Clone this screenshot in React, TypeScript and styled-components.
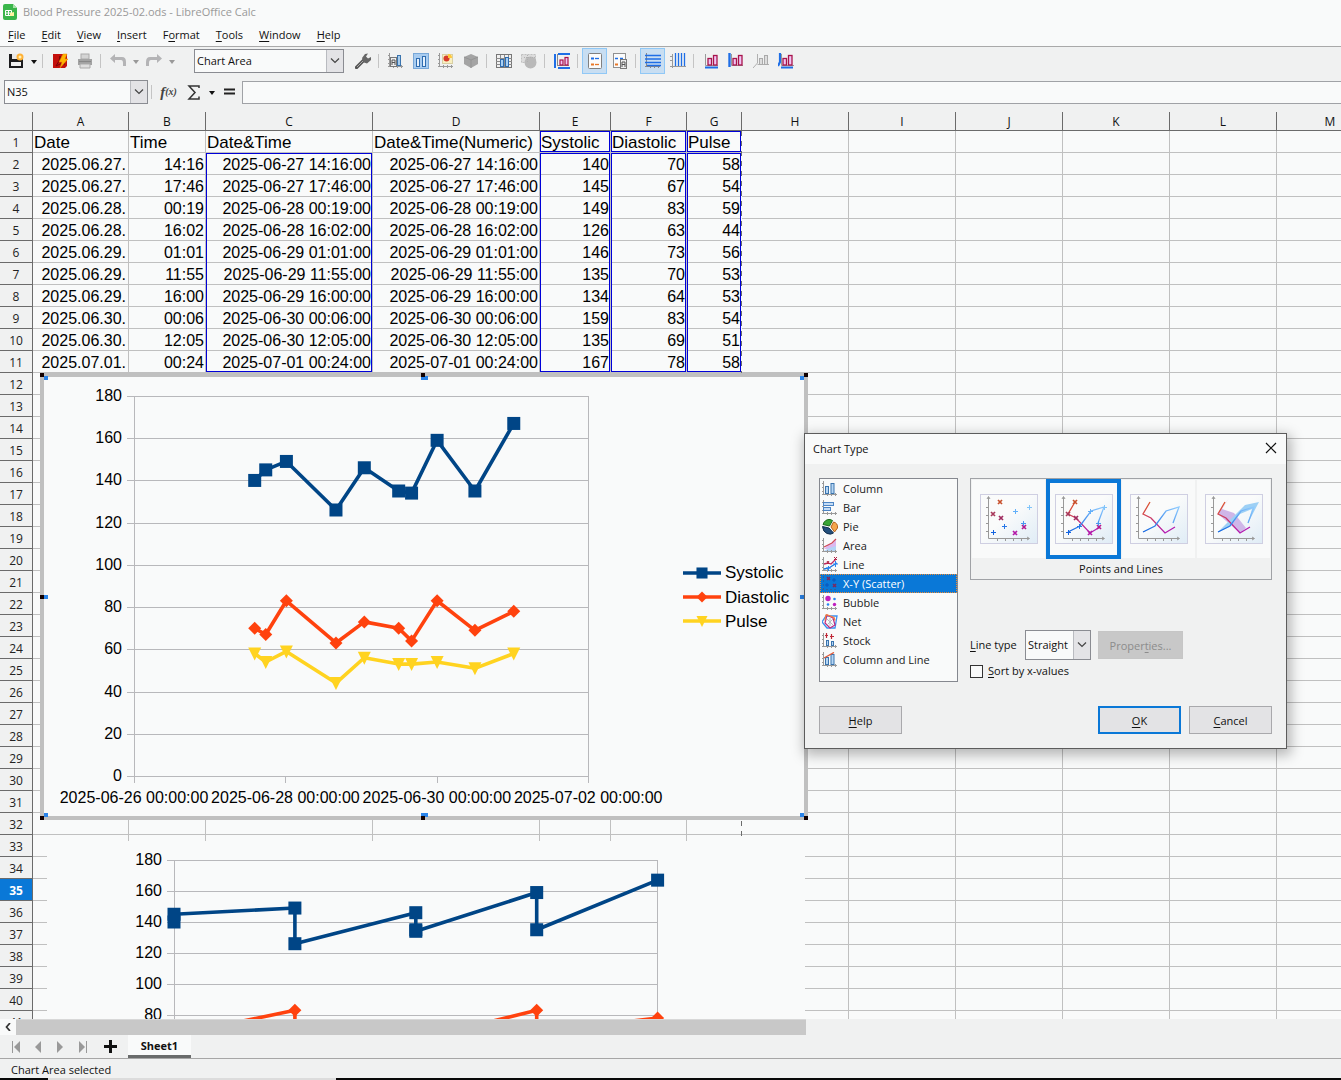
import React from "react";
import styled, { createGlobalStyle, css } from "styled-components";

const paper = "#f9fafa";
const chrome = "#f0f1f1";
const line = "#c0c0c0";
const dark = "#6b6b6b";
const accent = "#0a78d7";
const systolicColor = "#004586";
const diastolicColor = "#ff420e";
const pulseColor = "#ffd320";

const GlobalStyle = createGlobalStyle`
  * { box-sizing: border-box; }
  body { margin: 0; overflow: hidden; background: ${chrome}; }
  body, button, input, select {
    font-family: "Open Sans", "Noto Sans", sans-serif;
    font-size: 11px;
    line-height: 16px;
    color: #111;
  }
  button { margin: 0; padding: 0; }
`;

const Window = styled.div`
  position: relative;
  display: flex;
  flex-direction: column;
  height: 100vh;
  overflow: hidden;
  background: ${chrome};
`;

const TitleBar = styled.header`
  display: flex;
  align-items: center;
  gap: 5px;
  height: 23px;
  padding: 0 2px;
  background: ${paper};
  color: #999;
  flex: none;
`;

const MenuBar = styled.nav`
  display: flex;
  height: 24px;
  flex: none;
  background: ${paper};
  border-bottom: 1px solid #a9a9a9;
`;

const MenuItem = styled.button`
  border: 0;
  background: none;
  padding: 1px 8px 0;
`;

const U = styled.span`
  text-decoration: underline;
  text-underline-offset: 2px;
`;

const Toolbar = styled.div`
  display: flex;
  align-items: center;
  height: 28px;
  padding-left: 3px;
  flex: none;
`;

const ToolButton = styled.button<{ $on?: boolean }>`
  width: 25px;
  height: 26px;
  border: 1px solid ${(p) => (p.$on ? "#90c8f6" : "transparent")};
  background: ${(p) => (p.$on ? "#c8def2" : "none")};
  display: grid;
  place-items: center;
  flex: none;
`;

const CaretButton = styled.button`
  width: 11px;
  height: 24px;
  border: 0;
  background: none;
  display: grid;
  place-items: center;
  flex: none;
`;

const Separator = styled.span`
  width: 1px;
  height: 14px;
  margin: 0 4px 0 3px;
  background: #c4c4c4;
  flex: none;
`;

const SelectGap = styled.span`
  width: 6px;
  flex: none;
`;

const SelectFrame = styled.div<{ $w: number; $h: number; $gap?: number }>`
  display: flex;
  position: relative;
  width: ${(p) => p.$w}px;
  height: ${(p) => p.$h}px;
  margin-left: ${(p) => p.$gap || 0}px;
  border: 1px solid #8a8c92;
  background: ${paper};
  flex: none;
  select, input {
    appearance: none;
    flex: 1;
    min-width: 0;
    border: 0;
    border-radius: 0;
    outline: 0;
    padding: 0 0 0 2px;
    background: transparent;
  }
`;

const DropMark = styled.span`
  position: absolute;
  right: 0;
  top: 0;
  bottom: 0;
  width: 17px;
  display: grid;
  place-items: center;
  background: #e3e3e6;
  border-left: 1px solid #b9bbc0;
  pointer-events: none;
`;

const DropButton = styled.button`
  width: 17px;
  display: grid;
  place-items: center;
  background: #e3e3e6;
  border: 0;
  border-left: 1px solid #b9bbc0;
`;

const FormulaBar = styled.div`
  display: flex;
  align-items: center;
  height: 34px;
  padding-left: 4px;
  flex: none;
`;

const FormulaButton = styled.button`
  width: 25px;
  height: 22px;
  border: 0;
  background: none;
  display: grid;
  place-items: center;
`;

const FxText = styled.span`
  font-family: "Liberation Serif", serif;
  font-style: italic;
  font-weight: 700;
  font-size: 15px;
  color: #444;
  small { font-size: 10px; vertical-align: 2px; }
`;

const FormulaInput = styled.input`
  flex: 1;
  height: 23px;
  border: 1px solid #a0a2a6;
  border-right: 0;
  background: ${paper};
  outline: 0;
`;

const Sheet = styled.main`
  position: relative;
  flex: 1;
  min-height: 0;
  margin-top: 3px;
  overflow: hidden;
  background: ${paper};
`;

const Grid = styled.table`
  table-layout: fixed;
  border-spacing: 0;
  width: 1384px;
  min-width: 100%;
`;

const ColHead = styled.th`
  height: 19px;
  padding: 2px 0 0;
  background: ${chrome};
  border-right: 1px solid ${dark};
  border-bottom: 1px solid ${dark};
  font-weight: 400;
  font-size: 12px;
  line-height: 16px;
`;

const RowHead = styled.th<{ $active?: boolean }>`
  height: 22px;
  padding: 2px 0 0;
  background: ${(p) => (p.$active ? accent : chrome)};
  color: ${(p) => (p.$active ? "#fff" : "#222")};
  border-right: 1px solid ${dark};
  border-bottom: 1px solid ${dark};
  font-weight: ${(p) => (p.$active ? 700 : 400)};
  font-size: 12px;
  line-height: 19px;
`;

const Cell = styled.td<{ $kind?: "head" | "num" | "date" }>`
  height: 22px;
  padding: 2px 1px 0;
  border-right: 1px solid ${line};
  border-bottom: 1px solid ${line};
  font-family: "Liberation Sans", Arial, sans-serif;
  font-size: ${(p) => (p.$kind === "head" ? 17 : 16)}px;
  line-height: 19px;
  color: #000;
  white-space: nowrap;
  text-align: ${(p) => (p.$kind === "head" ? "left" : "right")};
  ${(p) => p.$kind === "date" && css`padding-right: 2px;`}
`;

const Range = styled.div<{ $x: number; $y: number; $w: number; $h: number }>`
  position: absolute;
  left: ${(p) => p.$x}px;
  top: ${(p) => p.$y}px;
  width: ${(p) => p.$w}px;
  height: ${(p) => p.$h}px;
  border: 1px solid #0000d8;
  pointer-events: none;
`;

const PageBreak = styled.div`
  position: absolute;
  left: 741px;
  top: 19px;
  height: 710px;
  width: 1px;
  background: repeating-linear-gradient(${dark} 0 5px, ${paper} 5px 10px);
`;

const ChartObject = styled.div`
  position: absolute;
  left: 40px;
  top: 261px;
  width: 768px;
  height: 447px;
  border: 4px solid ${line};
  background: ${paper};
  svg { display: block; overflow: visible; }
`;

const SecondChart = styled.div`
  position: absolute;
  left: 47px;
  top: 729px;
  width: 758px;
  height: 440px;
  background: ${paper};
  svg { display: block; }
`;

const ChartSvg = styled.svg`
  font-family: "Liberation Sans", Arial, sans-serif;
  font-size: 16px;
  .legend { font-size: 17px; }
`;

const ScrollRow = styled.div`
  display: flex;
  height: 16px;
  flex: none;
`;

const ScrollArrow = styled.button`
  width: 16px;
  border: 0;
  background: ${paper};
  display: grid;
  place-items: center;
`;

const ScrollThumb = styled.div`
  flex: 0 0 790px;
  background: #c8c8c8;
  border-top: 1px solid #d8d8d8;
`;

const TabBar = styled.div`
  display: flex;
  height: 24px;
  padding-left: 5px;
  border-bottom: 1px solid #a6a6a6;
  flex: none;
`;

const TabNav = styled.button<{ $w?: number }>`
  width: ${(p) => p.$w || 22}px;
  border: 0;
  background: none;
  display: grid;
  place-items: center;
`;

const SheetTab = styled.button`
  width: 63px;
  padding-top: 2px;
  border: 0;
  border-bottom: 3px solid #696b6b;
  background: ${paper};
  font-weight: 700;
  color: #111;
`;

const StatusBar = styled.footer`
  height: 19px;
  padding: 3px 11px 0;
  flex: none;
`;

const BottomEdge = styled.div`
  display: flex;
  height: 2px;
  background: #080808;
  flex: none;
  &::before {
    content: "";
    width: 288px;
    margin-left: 48px;
    background: #dcdcdc;
  }
`;

const Dialog = styled.section`
  position: absolute;
  left: 804px;
  top: 433px;
  width: 483px;
  border: 1px solid #5c5c5c;
  background: ${chrome};
  box-shadow: 2px 4px 12px 2px rgba(0, 0, 0, 0.28);
`;

const DialogTitle = styled.div`
  display: flex;
  align-items: center;
  justify-content: space-between;
  height: 30px;
  padding: 0 8px;
  background: ${paper};
`;

const CloseButton = styled.button`
  width: 14px;
  height: 16px;
  border: 0;
  background: none;
`;

const DialogBody = styled.div`
  display: grid;
  grid-template-columns: 139px 302px;
  column-gap: 12px;
  padding: 14px 14px 24px;
`;

const TypeList = styled.ul`
  list-style: none;
  margin: 0;
  padding: 0;
  height: 204px;
  border: 1px solid #85888f;
  background: ${paper};
`;

const TypeRow = styled.li<{ $on?: boolean }>`
  display: flex;
  align-items: center;
  gap: 5px;
  height: 19px;
  padding-left: 2px;
  color: ${(p) => (p.$on ? "#fff" : "#222")};
  background: ${(p) => (p.$on ? accent : "none")};
  outline: ${(p) => (p.$on ? "1px dotted #f08a30" : "none")};
  outline-offset: -1px;
`;

const Gallery = styled.div`
  border: 1px solid #a0a2a6;
  height: 102px;
  display: grid;
  grid-template-columns: repeat(4, 1fr);
  text-align: center;
`;

const Thumb = styled.button<{ $on?: boolean }>`
  height: 80px;
  border: ${(p) => (p.$on ? `4px solid ${accent}` : `1px solid ${chrome}`)};
  background: ${paper};
  display: grid;
  place-items: center;
`;

const ThumbName = styled.div`
  grid-column: 1 / -1;
  line-height: 20px;
`;

const Options = styled.div`
  display: flex;
  align-items: center;
  margin-top: 50px;
`;

const OptionLabel = styled.label`
  width: 55px;
`;

const PushButton = styled.button<{ $primary?: boolean; $wide?: boolean }>`
  width: ${(p) => (p.$wide ? 85 : 83)}px;
  height: 28px;
  padding-top: 1px;
  border: ${(p) => (p.$primary ? `2px solid ${accent}` : "1px solid #a9a9ac")};
  background: #e3e3e5;
  &:disabled {
    margin-left: 7px;
    border-color: #c6c6c6;
    background: #c8c8c8;
    color: #8c8c8c;
  }
`;

const CheckLabel = styled.label`
  display: flex;
  align-items: center;
  gap: 5px;
  margin-top: 3px;
  input {
    appearance: none;
    width: 13px;
    height: 13px;
    margin: 0;
    border: 1px solid #333;
    background: ${paper};
  }
`;

const DialogActions = styled.div`
  display: flex;
  gap: 8px;
  padding: 0 14px 14px;
  > :first-child { margin-right: auto; }
`;

/* ---------- data ---------- */

const readings = [
  ["2025-06-27", "14:16", 140, 70, 58],
  ["2025-06-27", "17:46", 145, 67, 54],
  ["2025-06-28", "00:19", 149, 83, 59],
  ["2025-06-28", "16:02", 126, 63, 44],
  ["2025-06-29", "01:01", 146, 73, 56],
  ["2025-06-29", "11:55", 135, 70, 53],
  ["2025-06-29", "16:00", 134, 64, 53],
  ["2025-06-30", "00:06", 159, 83, 54],
  ["2025-06-30", "12:05", 135, 69, 51],
  ["2025-07-01", "00:24", 167, 78, 58],
] as [string, string, number, number, number][];

const day = (d: string) => (d === "2025-07-01" ? 5 : Number(d.slice(8)) - 26);
const frac = (t: string) => (Number(t.slice(0, 2)) + Number(t.slice(3)) / 60) / 24;

const columns: [string, number][] = [
  ["A", 96], ["B", 77], ["C", 167], ["D", 167], ["E", 71], ["F", 76], ["G", 55],
  ["H", 107], ["I", 107], ["J", 107], ["K", 107], ["L", 107], ["M", 107],
];
const headings = ["Date", "Time", "Date&Time", "Date&Time(Numeric)", "Systolic", "Diastolic", "Pulse"];

/* ---------- charts ---------- */

const Mark = ({ kind, x, y }: { kind: number; x: number; y: number }) =>
  kind === 0 ? <rect x={x - 6.5} y={y - 6.5} width="13" height="13" fill={systolicColor} /> :
  kind === 1 ? <path d={`M${x} ${y - 6.5}l6.5 6.5l-6.5 6.5l-6.5-6.5z`} fill={diastolicColor} /> :
  <path d={`M${x - 6.5} ${y - 6}h13l-6.5 13z`} fill={pulseColor} />;

const seriesColors = [systolicColor, diastolicColor, pulseColor];

const Series = ({ fx, fy }: { fx: (i: number) => number; fy: (v: number) => number }) => (
  <>
    {[0, 1, 2].map((s) => (
      <g key={s}>
        <polyline fill="none" stroke={seriesColors[s]} strokeWidth="3.6" strokeLinejoin="round"
          points={readings.map((r, i) => `${fx(i)},${fy(r[s + 2] as number)}`).join(" ")} />
        {readings.map((r, i) => <Mark key={i} kind={s} x={fx(i)} y={fy(r[s + 2] as number)} />)}
      </g>
    ))}
  </>
);

const Axes = ({ x0, x1, y0, step, rows = 10 }: { x0: number; x1: number; y0: number; step: number; rows?: number }) => (
  <g stroke="#b8b8bb">
    {Array.from({ length: rows }, (_, i) => (
      <React.Fragment key={i}>
        <path d={`M${x0 - 7} ${Math.round(y0 + i * step) + 0.5}H${x1}`} />
        <text x={x0 - 12} y={Math.round(y0 + i * step) + 5} textAnchor="end" fill="#000" stroke="none">{180 - i * 20}</text>
      </React.Fragment>
    ))}
    <path d={`M${x0 + 0.5} ${y0}V${y0 + step * 9 + 7}M${x1 + 0.5} ${y0}V${y0 + step * 9 + 7}`} />
  </g>
);

const Handles = () => (
  <>
    {[0, 383, 764].flatMap((x, i) => [0, 222, 443].map((y, j) => i === 1 && j === 1 ? null : (
      <g key={`${x}-${y}`} transform={`translate(${x - 4 - (i === 1 ? 2 : 0)} ${y - 4})`}>
        <path d={`M${i === 2 ? -4 : i === 1 ? 0 : 4} ${j === 2 ? -3 : j === 1 ? 0 : 3}h${i === 1 ? 7 : 4}v4h${i === 1 ? -7 : -4}z`} fill="#2a84ea" />
        <rect width="4" height="4" fill="#100" />
      </g>
    )))}
  </>
);

const TimeChart = () => {
  const fx = (i: number) => 90 + (day(readings[i][0]) + frac(readings[i][1])) * 75.7;
  const fy = (v: number) => 19 + (180 - v) * 2.111;
  return (
    <ChartSvg width="760" height="439" viewBox="0 0 760 439">
      <Axes x0={90} x1={544} y0={19} step={42.22} />
      <path d="M241.5 399v7M393.5 399v7" stroke="#b8b8bb" />
      {["2025-06-26", "2025-06-28", "2025-06-30", "2025-07-02"].map((d, i) => (
        <text key={d} x={90 + i * 151.4} y="426" textAnchor="middle">{d} 00:00:00</text>
      ))}
      <Series fx={fx} fy={fy} />
      {["Systolic", "Diastolic", "Pulse"].map((n, i) => (
        <g key={n}>
          <path d={`M639 ${196 + i * 24}h38`} stroke={seriesColors[i]} strokeWidth="3.6" />
          <g transform={`translate(658 ${196 + i * 24}) scale(0.85)`}><Mark kind={i} x={0} y={0} /></g>
          <text className="legend" x="681" y={201 + i * 24.5}>{n}</text>
        </g>
      ))}
      <Handles />
    </ChartSvg>
  );
};

const DateChart = () => (
  <ChartSvg width="758" height="440" viewBox="0 0 758 440">
    <Axes x0={127} x1={610} y0={19} step={31} rows={6} />
    <Series fx={(i) => 127 + (day(readings[i][0]) - 1) * 120.9} fy={(v) => 19 + (180 - v) * 1.55} />
  </ChartSvg>
);

/* ---------- icons ---------- */

const Svg = ({ s = 16, h, children }: { s?: number; h?: number; children: React.ReactNode }) => (
  <svg width={s} height={h || s} viewBox={`0 0 ${s} ${h || s}`} fill="none">{children}</svg>
);
const Chevron = () => <Svg s={10} h={6}><path d="M1 .5l4 4l4-4" stroke="#444" strokeWidth="1.2" /></Svg>;
const Caret = ({ c = "#111" }: { c?: string }) => <Svg s={8} h={6}><path d="M1 2h6l-3 4z" fill={c} /></Svg>;
const axes = <path d="M1.5 0v14M0 13.5h15M0 2.5h2M0 6.5h2M0 10.5h2M5.5 12v3M9.5 12v3M13.5 12v3" stroke="#999" />;
const blueBars = (
  <g fill="#b6d6f4" stroke="#3a74ae"><rect x="3.500" y="5.500" width="3" height="7" /><rect x="9" y="2.500" width="3" height="10" /></g>
);
const pinkBars = (
  <g fill="#f0c4f4" stroke="#a8144c" strokeWidth="1.300"><rect x="5" y="5.500" width="3.500" height="6.500" /><rect x="10.500" y="2.500" width="3.500" height="9.500" /></g>
);

const listIcons: Record<string, React.ReactNode> = {
  Column: <>{axes}{blueBars}</>,
  Bar: <>{axes}<g fill="#c4dcf6" stroke="#4c84c4"><rect x="1.5" y="2.5" width="10" height="3" /><rect x="1.5" y="7.5" width="7" height="3" /></g></>,
  Pie: <><path d="M7.500 7L1 5.500Q3 0 8 .5l2.500 1z" fill="#3aa636" stroke="#1b6a1b" /><path d="M9 8l2.500-5q4.500 1 4 6l-3 4z" fill="#f5a64c" stroke="#b3611c" /><path d="M7 9L.5 7.500Q1 13 5 14.500q4 1.500 6.500-.5z" fill="#234f7c" stroke="#132f4e" /></>,
  Area: <><path d="M2 11L6 7l4-1l4-4v9z" fill="#dcb8ee" /><path d="M2 13l5-3l7-2v5z" fill="#b4d4f6" />{axes}<path d="M2 9l4-2l4-2l4-4" stroke="#d04858" strokeWidth="1.300" /></>,
  Line: <>{axes}<path d="M2 7l4-1l3 1l5-5" stroke="#c02860" strokeWidth="1.300" /><path d="M2 12l5-1l3-2l5-3" stroke="#1672e0" strokeWidth="1.300" /><path d="M12 0l3 3m0-3l-3 3M5 4l2 3m0-3l-2 3" stroke="#b02040" /><path d="M11 7h5M13.500 4v6M4 11h5M6.500 9v5" stroke="#2a86f0" /></>,
  "X-Y (Scatter)": <><path d="M1.500 0v14M0 13.500h15" stroke="#30609c" strokeDasharray="2 2" /><path d="M5 1l3 3m0-3l-3 3M11 8l3 3m0-3l-3 3" stroke="#7a2a62" strokeWidth="1.500" /><path d="M3 9h4M5 7v4M10 4h4M12 2v4" stroke="#0b55bb" /></>,
  Bubble: <>{axes}<circle cx="6" cy="3.500" r="2.700" fill="#c020c0" /><circle cx="12.500" cy="9.500" r="1.700" fill="#c020c0" /><circle cx="12.500" cy="4" r="1.300" fill="#2a86f0" /><circle cx="6" cy="9.500" r="1.300" fill="#2a86f0" /></>,
  Net: <><path d="M4 2l11 0l-2 12l-8 0l-5-6z" stroke="#3a8ef0" strokeWidth="1.300" /><path d="M5 1l-2 8l5 5l5-3l-2-7z" stroke="#c02880" strokeWidth="1.200" /><path d="M4 .5l8 3l1 3M4 .5l-1 6" stroke="#f08040" strokeWidth="1.300" /><path d="M5 5l6 6m0-6l-6 6M8 4v8" stroke="#b8b8c4" /></>,
  Stock: <>{axes}<g fill="#b6d6f4" stroke="#3a74ae"><rect x="4.500" y="7.500" width="2" height="5" /><rect x="9.500" y="8.500" width="2" height="4" /></g><path d="M4.500 0v5M3 2.500h3M9.500 1v5M8 3.500h4" stroke="#c02838" strokeWidth="1.200" /></>,
  "Column and Line": <>{axes}{blueBars}<path d="M2 6l10-5.500" stroke="#e05a3a" strokeWidth="1.400" /></>,
};

const ThumbIcon = ({ kind }: { kind: number }) => (
  <svg width="60" height="52" viewBox="0 0 60 52" fill="none">
    <defs>
      <linearGradient id="card" x1="0" y1="0" x2="1" y2="1"><stop offset=".45" stopColor="#fafbfb" /><stop offset="1" stopColor="#dfecf6" /></linearGradient>
      <linearGradient id="warm" x1="0" y1="0" x2=".6" y2="1"><stop stopColor="#e05a20" /><stop offset="1" stopColor="#b41ab0" /></linearGradient>
      <linearGradient id="cool" x1="0" y1="1" x2="1" y2="0"><stop stopColor="#0c62e0" /><stop offset="1" stopColor="#90ccff" /></linearGradient>
    </defs>
    <rect x="1.500" y="1.500" width="57" height="49" fill="url(#card)" stroke="#cfcfe2" />
    <path d="M9.500 45.500V4M8 6l1.500-2.500L11 6M9.500 45.500H50M48 44l2.500 1.500L48 47M7 14.500h3M7 22.500h3M7 30.500h3M7 38.500h3M18.500 45v3M26.500 45v3M34.500 45v3M42.500 45v3" stroke="#999" />
    {kind === 3 && <><path d="M14 21l11-16l-7 11l12 4l12 15l-6 5z" fill="#cfb6e8" /><path d="M14 39l22-22l5-5l14-3l-11 21l4-14l-12 5l-11 13z" fill="#9dd0f5" /></>}
    {kind > 0 && <><path d="M21 9L14 21l8 4l14 15l10-6" stroke="url(#warm)" strokeWidth="1.300" /><path d="M14 39l12-6l11-15l13-4l-6 16" stroke="url(#cool)" strokeWidth="1.300" /></>}
    {kind < 2 && <>
      {[[21, 9, "#c8502c"], [14, 21, "#a83a5c"], [22, 25, "#a02c60"], [36, 40, "#b41aa8"], [45, 34, "#b41a90"]].map(([x, y, c]) => (
        <path key={`${x}`} d={`M${Number(x) - 2} ${Number(y) - 2}l4 4m0-4l-4 4`} stroke={c as string} strokeWidth="1.700" />
      ))}
      {[[14.5, 39.5, "#1464e0"], [25.5, 33.5, "#2878e8"], [36.5, 18.5, "#62b0fa"], [44.5, 30.5, "#4898f0"], [50.5, 14.5, "#80c4fa"]].map(([x, y, c]) => (
        <path key={`${x}`} d={`M${Number(x) - 2.5} ${y}h5M${x} ${Number(y) - 2.5}v5`} stroke={c as string} />
      ))}
    </>}
  </svg>
);

const toolIcons: Record<string, React.ReactNode> = {
  save: <><path d="M1 1h12l2 2v12H1z" fill="#1c1c1e" /><rect x="4" y="1" width="7" height="5" fill="#e8e8e8" /><rect x="3" y="9" width="10" height="4" fill="#f0f0f0" /><circle cx="12" cy="4" r="3.500" fill="#ffb238" /><circle cx="12" cy="4" r="1.500" fill="#fff2b8" /></>,
  pdf: <><path d="M1 1h14v12l-2 2H1z" fill="#c4100c" /><path d="M4 13q4-5 4-10q1 7 5 8q-5-1-9 2" stroke="#7a0606" /><path d="M11 1h4l-2 5h3L8 15l2-6H7z" fill="#ffb400" stroke="#e88800" strokeWidth=".5" /></>,
  print: <><rect x="4" y="1" width="8" height="5" fill="#d4d4d4" stroke="#aaa" /><path d="M1 6h14v6H1z" fill="#a2a2a2" /><path d="M3 11h10v4H3z" fill="#dedede" stroke="#aaa" /><path d="M2 8.500h12" stroke="#888" /></>,
  undo: <path d="M5 1L0 5.500L5 10V7h6q2 0 2 3v3h3V9q0-5-4-5H5z" fill="#b4b4b6" />,
  redo: <path d="M11 1l5 4.500L11 10V7H5q-2 0-2 3v3H0V9q0-5 4-5h7z" fill="#b4b4b6" />,
  wrench: <><path d="M1.500 14.500l7-7" stroke="#555" strokeWidth="3.200" strokeLinecap="round" /><path d="M8 8L7 5l3-4l3-.5l-2 3l2 2l3-1.500v3l-4 3.500l-3-1z" fill="#666" /><path d="M2 14l6-6" stroke="#aaa" /></>,
  select: <>{axes}<rect x="2.500" y="4.500" width="6" height="9" fill="#eee" stroke="#777" /><path d="M4 12V7h3v5M4 9.500h3" stroke="#555" /><rect x="9.500" y="2.500" width="3" height="10" fill="#a8ccec" stroke="#3a74ae" /></>,
  type: <><rect x=".5" y=".5" width="15" height="15" fill="#a8ccf0" stroke="#79a8d8" /><g fill="#e6f1fc" stroke="#2e6cb0"><rect x="3.500" y="5.500" width="3" height="8" /><rect x="9.500" y="3.500" width="3" height="10" /></g></>,
  range: <>{axes}<rect x="4.500" y="1.500" width="10" height="9" fill="#f8efc0" stroke="#d8cfa4" /><circle cx="8.500" cy="5.500" r="3" fill="#d63a2a" /><path d="M10 5V1a4 4 0 0 1 4 4z" fill="#ffc83c" /></>,
  cube: <><path d="M1 4l7-3l7 3v7l-7 4l-7-4z" fill="#a4a4a4" /><path d="M1 4l7 3l7-3M8 7v8" stroke="#949494" /></>,
  table: <><rect x=".5" y="1.500" width="15" height="13" fill="#f0f0f0" stroke="#777" /><path d="M0 5.500h16M0 8.500h16M0 11.500h16M4.500 2v12M8.500 2v12M12.500 2v12" stroke="#8a8a8a" /><rect x="4.500" y="6.500" width="3" height="7" fill="#a8d0f4" stroke="#2e6cb0" /><rect x="9.500" y="4.500" width="3" height="9" fill="#a8d0f4" stroke="#2e6cb0" /></>,
  pieOff: <><path d="M.5 1.500h14v8h-14z" fill="#dcdcdc" stroke="#c0c0c0" strokeDasharray="2 1" /><circle cx="9.500" cy="9.500" r="6" fill="#b9b9b9" /><path d="M3 4.500h11M6.500 2v7" stroke="#b0b0b0" strokeDasharray="1 1" /></>,
  titles: <><path d="M1 1v14M4 1h12M4 15h12" stroke="#1e6ee6" strokeWidth="2" /><path d="M3.500 1v12M3 12.500h12" stroke="#888" /><g fill="#f0c4f4" stroke="#a8144c" strokeWidth="1.200"><rect x="6" y="7" width="3" height="5" /><rect x="11" y="4.500" width="3" height="7.500" /></g></>,
  legend: <><rect x="1.500" y=".5" width="13" height="15" rx="1" fill="#fbfbfb" stroke="#808080" /><path d="M4 5.500h3" stroke="#1e6ee6" strokeWidth="2" /><path d="M4 11.500h3" stroke="#e87828" strokeWidth="2" /><path d="M8 5.500h4" stroke="#1e6ee6" strokeWidth="1.300" /><path d="M8 11.500h4" stroke="#e87828" strokeWidth="1.300" /></>,
  legendPos: <><rect x="1.500" y=".5" width="12" height="14" fill="#fbfbfb" stroke="#909090" /><path d="M3 5.500h3M8 5.500h3" stroke="#1e6ee6" strokeWidth="1.600" /><path d="M3 11.500h3" stroke="#e87828" strokeWidth="2" /><rect x="8.500" y="6.500" width="6" height="9" fill="#eee" stroke="#777" /><path d="M10 14V9h3v5M10 11.500h3" stroke="#555" /></>,
  hgrid: <><path d="M1.500 0v14M0 13.500h15M5.500 12v3M9.500 12v3M13.500 12v3" stroke="#888" /><path d="M0 2.500h16M0 6h16M0 9.500h16M2 12.500h14" stroke="#1e6ee6" strokeWidth="1.400" /></>,
  vgrid: <><path d="M2.500 1v14M0 13.500h16M0 3.500h3M0 7.500h3" stroke="#999" /><path d="M5.500 0v13M8.500 0v13M11.500 0v13M14.500 0v13" stroke="#1e6ee6" strokeWidth="1.300" /></>,
  xaxis: <><path d="M2.500 1v11.500H15" stroke="#999" />{pinkBars}<path d="M2 14.500h13" stroke="#1e6ee6" strokeWidth="2" /></>,
  yaxis: <><path d="M3.500 1v11.500H15" stroke="#999" />{pinkBars}<path d="M1.500 0v14" stroke="#1e6ee6" strokeWidth="2.400" /></>,
  zaxis: <><path d="M4.500 1v9L0 15M4.500 11.500H16" stroke="#b0b0b0" /><g fill="#ddd" stroke="#aaa"><rect x="6.500" y="5.500" width="3" height="6" /><rect x="11.500" y="2.500" width="3" height="9" /></g></>,
  allaxes: <><path d="M2 0v9L0 13M3 14.500h12" stroke="#1e6ee6" strokeWidth="2.200" /><path d="M3.500 1v11.500H16" stroke="#999" />{pinkBars}</>,
};

const Tool = ({ n, on }: { n: string; on?: boolean }) => (
  <ToolButton $on={on} aria-label={n} aria-pressed={on}><Svg>{toolIcons[n]}</Svg></ToolButton>
);

const Mnemonic = ({ t, i = 0 }: { t: string; i?: number }) => (
  <>{t.slice(0, i)}<U>{t[i]}</U>{t.slice(i + 1)}</>
);

/* ---------- page parts ---------- */

const cellText = (row: number, col: number) => {
  if (row === 1) return headings[col];
  const r = readings[row - 2];
  if (!r) return "";
  const [d, t, s, di, p] = r;
  return [d.replace(/-/g, ".") + ".", t, `${d} ${t}:00`, `${d} ${t}:00`, s, di, p][col];
};

const SheetGrid = () => (
  <Grid>
    <colgroup>
      <col style={{ width: 33 }} />
      {columns.map(([n, w]) => <col key={n} style={{ width: w }} />)}
    </colgroup>
    <thead>
      <tr><ColHead aria-label="Select all" />{columns.map(([n]) => <ColHead key={n}>{n}</ColHead>)}</tr>
    </thead>
    <tbody>
      {Array.from({ length: 41 }, (_, k) => k + 1).map((row) => (
        <tr key={row}>
          <RowHead $active={row === 35}>{row}</RowHead>
          {columns.map(([n], c) => (
            <Cell key={n} $kind={row === 1 ? "head" : c === 0 ? "date" : "num"}>{c < 7 ? cellText(row, c) : ""}</Cell>
          ))}
        </tr>
      ))}
    </tbody>
  </Grid>
);

const ChartTypeDialog = () => (
  <Dialog role="dialog" aria-label="Chart Type">
    <DialogTitle>
      Chart Type
      <CloseButton aria-label="Close"><Svg s={14}><path d="M2 2l10 10M12 2L2 12" stroke="#111" strokeWidth="1.200" /></Svg></CloseButton>
    </DialogTitle>
    <DialogBody>
      <TypeList>
        {Object.keys(listIcons).map((n) => (
          <TypeRow key={n} $on={n === "X-Y (Scatter)"}><Svg>{listIcons[n]}</Svg>{n}</TypeRow>
        ))}
      </TypeList>
      <div>
        <Gallery>
          {[0, 1, 2, 3].map((k) => <Thumb key={k} $on={k === 1} aria-label={`Variant ${k + 1}`}><ThumbIcon kind={k} /></Thumb>)}
          <ThumbName>Points and Lines</ThumbName>
        </Gallery>
        <Options>
          <OptionLabel htmlFor="lineType"><Mnemonic t="Line type" /></OptionLabel>
          <SelectFrame $w={66} $h={30}>
            <select id="lineType"><option>Straight</option></select>
            <DropMark><Chevron /></DropMark>
          </SelectFrame>
          <PushButton $wide disabled><Mnemonic t="Properties..." i={6} /></PushButton>
        </Options>
        <CheckLabel><input type="checkbox" /><span><Mnemonic t="Sort by x-values" /></span></CheckLabel>
      </div>
    </DialogBody>
    <DialogActions>
      <PushButton><Mnemonic t="Help" /></PushButton>
      <PushButton $primary><Mnemonic t="OK" /></PushButton>
      <PushButton><Mnemonic t="Cancel" /></PushButton>
    </DialogActions>
  </Dialog>
);

const menus: [string, number][] = [["File", 0], ["Edit", 0], ["View", 0], ["Insert", 0], ["Format", 1], ["Tools", 0], ["Window", 0], ["Help", 0]];

const ranges = [[206, 41, 166, 219], [540, 19, 70, 21], [611, 19, 75, 21], [687, 19, 54, 21], [540, 41, 70, 219], [611, 41, 75, 219], [687, 41, 54, 219]];

export default function App() {
  return (
    <Window>
      <GlobalStyle />
      <TitleBar>
        <Svg><path d="M3 0h8l4 4v10a2 2 0 0 1-2 2H3a2 2 0 0 1-2-2V2a2 2 0 0 1 2-2z" fill="#3ab54a" /><path d="M11 0l4 4h-4z" fill="#a8e0a8" /><path d="M3.500 6.500h6v5h-6zM3.500 9h6M6.500 6.500v5" stroke="#fff" /><path d="M8 12V9l4-1v4z" fill="#fff3a0" /></Svg>
        Blood Pressure 2025-02.ods - LibreOffice Calc
      </TitleBar>
      <MenuBar>
        {menus.map(([t, i]) => <MenuItem key={t}><Mnemonic t={t} i={i} /></MenuItem>)}
      </MenuBar>
      <Toolbar>
        <Tool n="save" /><CaretButton aria-label="Save options"><Caret /></CaretButton><Separator />
        <Tool n="pdf" /><Tool n="print" /><Separator />
        <Tool n="undo" /><CaretButton aria-label="Undo list"><Caret c="#999" /></CaretButton>
        <Tool n="redo" /><CaretButton aria-label="Redo list"><Caret c="#999" /></CaretButton>
        <SelectFrame $w={150} $h={24} $gap={17}>
          <select aria-label="Chart element"><option>Chart Area</option></select>
          <DropMark><Chevron /></DropMark>
        </SelectFrame>
        <SelectGap />
        <Tool n="wrench" /><Separator />
        <Tool n="select" /><Tool n="type" /><Tool n="range" /><Tool n="cube" /><Separator />
        <Tool n="table" /><Tool n="pieOff" /><Separator />
        <Tool n="titles" /><Separator />
        <Tool n="legend" on /><Tool n="legendPos" /><Separator />
        <Tool n="hgrid" on /><Tool n="vgrid" /><Separator />
        <Tool n="xaxis" /><Tool n="yaxis" /><Tool n="zaxis" /><Tool n="allaxes" />
      </Toolbar>
      <FormulaBar>
        <SelectFrame $w={144} $h={24}>
          <input aria-label="Name box" defaultValue="N35" />
          <DropButton aria-label="Names"><Chevron /></DropButton>
        </SelectFrame>
        <Separator />
        <FormulaButton aria-label="Function wizard"><FxText>f<small>(x)</small></FxText></FormulaButton>
        <FormulaButton aria-label="Sum"><Svg s={14} h={15}><path d="M12 3V1H2l6 6.500L2 14h10v-2.500" stroke="#333" strokeWidth="1.500" /></Svg></FormulaButton>
        <CaretButton aria-label="Functions"><Caret /></CaretButton>
        <FormulaButton aria-label="Formula"><Svg s={12} h={8}><path d="M0 1.500h11M0 5.500h11" stroke="#222" strokeWidth="2" /></Svg></FormulaButton>
        <FormulaInput aria-label="Input line" />
      </FormulaBar>
      <Sheet>
        <SheetGrid />
        <PageBreak />
        {ranges.map(([x, y, w, h]) => <Range key={`${x}-${y}`} $x={x} $y={y} $w={w} $h={h} />)}
        <SecondChart><DateChart /></SecondChart>
        <ChartObject><TimeChart /></ChartObject>
      </Sheet>
      <ScrollRow>
        <ScrollArrow aria-label="Scroll left"><Svg s={6} h={8}><path d="M5 0L1.500 4L5 8" stroke="#333" strokeWidth="1.700" /></Svg></ScrollArrow>
        <ScrollThumb />
      </ScrollRow>
      <TabBar>
        <TabNav aria-label="First sheet"><Svg s={9} h={12}><path d="M.5 0v12" stroke="#999" /><path d="M8 0v12L2 6z" fill="#999" /></Svg></TabNav>
        <TabNav aria-label="Previous sheet"><Svg s={6} h={12}><path d="M6 0v12L0 6z" fill="#999" /></Svg></TabNav>
        <TabNav aria-label="Next sheet"><Svg s={6} h={12}><path d="M0 0v12l6-6z" fill="#999" /></Svg></TabNav>
        <TabNav aria-label="Last sheet"><Svg s={9} h={12}><path d="M8.500 0v12" stroke="#999" /><path d="M1 0v12l6-6z" fill="#999" /></Svg></TabNav>
        <TabNav $w={35} aria-label="Add sheet"><Svg s={13}><path d="M6.500 0v13M0 6.500h13" stroke="#111" strokeWidth="3" /></Svg></TabNav>
        <SheetTab>Sheet1</SheetTab>
      </TabBar>
      <StatusBar>Chart Area selected</StatusBar>
      <BottomEdge />
      <ChartTypeDialog />
    </Window>
  );
}
